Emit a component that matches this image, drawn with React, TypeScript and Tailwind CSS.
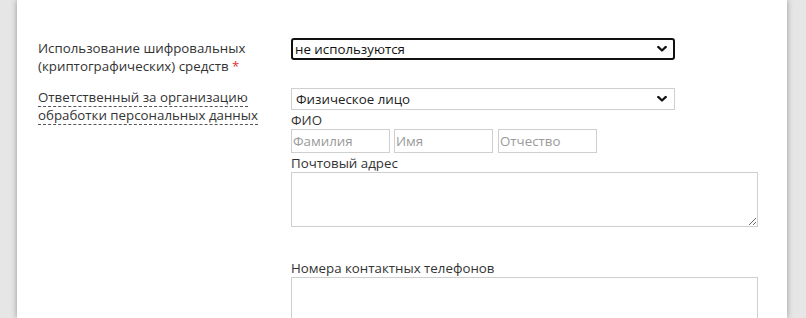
import React from "react";

function Chevron() {
  return (
    <svg width="10" height="7" viewBox="0 0 10 7" className="pointer-events-none absolute right-[8px] top-1/2 -translate-y-1/2">
      <path d="M1.2 1.4 L5 5 L8.8 1.4" fill="none" stroke="#111" strokeWidth="2.2" strokeLinecap="round" strokeLinejoin="round" />
    </svg>
  );
}

export default function App() {
  const font = { fontFamily: '"Open Sans", "Noto Sans", Arial, sans-serif' };
  return (
    <div className="flex h-[318px] w-[806px] overflow-hidden bg-[#e6e6e6] pl-[17px] pr-[19px]" style={font}>
      <div className="flex-1 bg-white pl-[21px] pt-[38px] text-[13.3px] leading-[18px] text-[#333] shadow-[0_0_6px_rgba(0,0,0,0.35)]">
        <div className="flex">
          <div className="w-[253px] pt-[1px]">
            <div>Использование шифровальных</div>
            <div>
              (криптографических) средств <span className="text-[#e0302e]">*</span>
            </div>
          </div>
          <div className="relative h-[22px] w-[384px]">
            <select className="h-[22px] w-full appearance-none rounded-[3px] border-2 border-[#111] bg-white pl-[2px] text-[13.3px] leading-[18px] text-[#111] outline-none">
              <option>не используются</option>
            </select>
            <Chevron />
          </div>
        </div>

        <div className="mt-[13px] flex">
          <div className="w-[253px]">
            <div>
              <span className="border-b border-dashed border-[#555]">Ответственный за организацию</span>
            </div>
            <div>
              <span className="border-b border-dashed border-[#555]">обработки персональных данных</span>
            </div>
          </div>
          <div className="w-[467px]">
            <div className="relative h-[22px] w-[384px]">
              <select className="h-[22px] w-full appearance-none border border-[#cfcfcf] bg-white pl-[4px] text-[13.3px] leading-[18px] text-[#222] outline-none">
                <option>Физическое лицо</option>
              </select>
              <Chevron />
            </div>
            <div className="mt-[1px] leading-[18px]">ФИО</div>
            <div className="flex gap-[4px]">
              <input placeholder="Фамилия" className="h-[24px] w-[99px] border border-[#cfcfcf] px-[1px] text-[13.3px] outline-none placeholder:text-[#9a9a9a]" />
              <input placeholder="Имя" className="h-[24px] w-[99px] border border-[#cfcfcf] px-[1px] text-[13.3px] outline-none placeholder:text-[#9a9a9a]" />
              <input placeholder="Отчество" className="ml-[1px] h-[24px] w-[99px] border border-[#cfcfcf] px-[1px] text-[13.3px] outline-none placeholder:text-[#9a9a9a]" />
            </div>
            <div className="mt-[1px] leading-[18px]">Почтовый адрес</div>
            <textarea className="block h-[55px] w-[467px] border border-[#cfcfcf] outline-none" />
            <div className="mt-[32px] leading-[18px]">Номера контактных телефонов</div>
            <textarea className="block h-[55px] w-[467px] border border-[#cfcfcf] outline-none" />
          </div>
        </div>
      </div>
    </div>
  );
}
